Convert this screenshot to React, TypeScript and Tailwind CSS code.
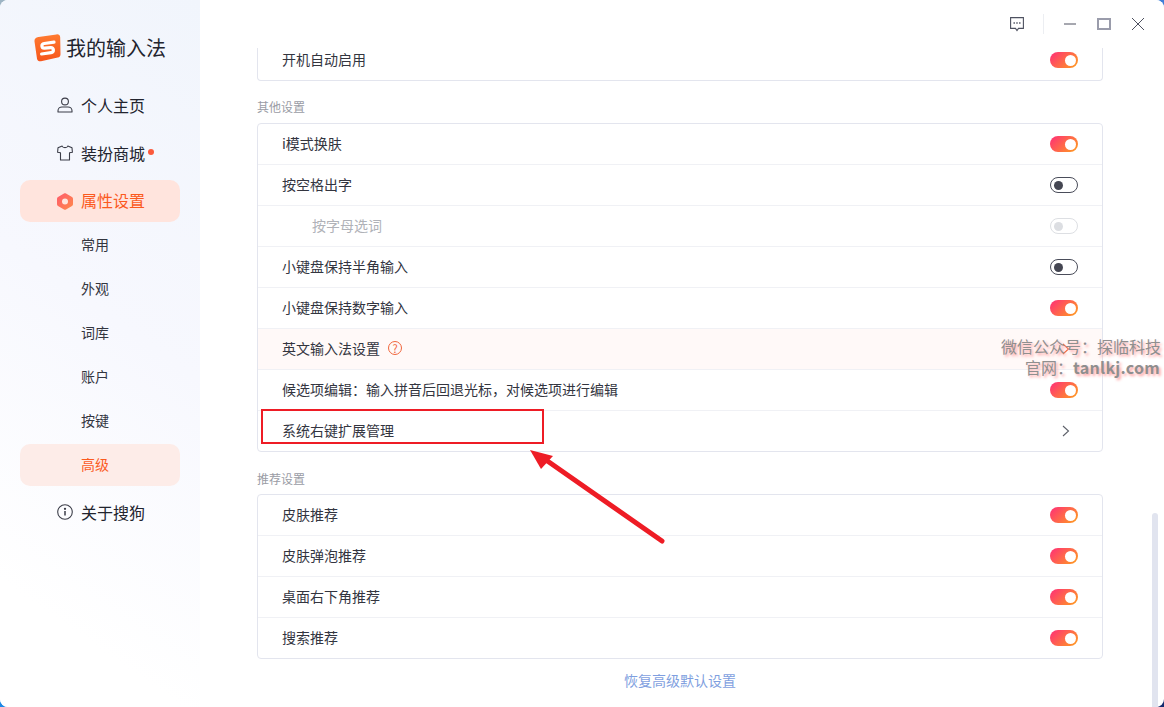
import type { ReactNode } from 'react';

type RowProps = {
  label: ReactNode;
  toggle?: 'on' | 'off' | 'disabled';
  chevron?: boolean;
  indent?: boolean;
  highlight?: boolean;
  muted?: boolean;
  last?: boolean;
};

function Toggle({ state }: { state: 'on' | 'off' | 'disabled' }) {
  if (state === 'on') {
    return (
      <div className="flex h-4 w-7 items-center justify-end rounded-full bg-[linear-gradient(135deg,#ff2d78,#ffa01e)] pr-[2px]">
        <div className="h-[11px] w-[11px] rounded-full bg-white" />
      </div>
    );
  }
  if (state === 'off') {
    return (
      <div className="flex h-4 w-7 items-center rounded-full border border-[#4a4d5a] bg-white pl-[3px]">
        <div className="h-[9px] w-[9px] rounded-full bg-[#444652]" />
      </div>
    );
  }
  return (
    <div className="flex h-4 w-7 items-center rounded-full border border-[#dddfe3] bg-white pl-[3px]">
      <div className="h-[9px] w-[9px] rounded-full bg-[#dcdee2]" />
    </div>
  );
}

function Row({ label, toggle, chevron, indent, highlight, muted, last }: RowProps) {
  return (
    <div
      className={`flex items-center justify-between pr-6 text-sm ${last ? 'h-[40px]' : 'h-[41px] border-b border-[#f0f1f5]'} ${
        indent ? 'pl-[54px]' : 'pl-6'
      } ${highlight ? 'bg-[#fff9f8]' : ''} ${muted ? 'text-[#b0b2b8]' : 'text-[#33353f]'}`}
    >
      <div className="flex items-center pb-[2px]">{label}</div>
      {toggle && <Toggle state={toggle} />}
      {chevron && (
        <svg width="28" height="16" viewBox="0 0 28 16" fill="none">
          <path d="M13 3l5.500 5-5.500 5" stroke={highlight ? '#f0663c' : '#5d6069'} strokeWidth="1.1" />
        </svg>
      )}
    </div>
  );
}

function Card({ children }: { children: ReactNode }) {
  return <div className="rounded border border-[#e3e5ee] bg-white">{children}</div>;
}

function SectionTitle({ children, tight }: { children: ReactNode; tight?: boolean }) {
  return (
    <div className={`h-[20px] text-xs leading-[20px] text-[#9a9ca5] ${tight ? 'mb-[5px] mt-[17px]' : 'mb-[6px] mt-4'}`}>
      {children}
    </div>
  );
}

function UserIcon() {
  return (
    <svg width="16" height="16" viewBox="0 0 16 16" fill="none" stroke="#3b3d48" strokeWidth="1.1">
      <circle cx="8" cy="4.500" r="3.400" />
      <path d="M1 15v-1.200C1 11.400 3 10 5 10h6c2 0 4 1.400 4 3.800V15z" strokeLinejoin="round" />
    </svg>
  );
}

function ShirtIcon() {
  return (
    <svg width="16" height="16" viewBox="0 0 16 16" fill="none" stroke="#3b3d48" strokeWidth="1.1" strokeLinejoin="round">
      <path d="M5.200 1L1 2.800.6 7.200l2.900.6V15h9V7.800l2.900-.6L15 2.800 10.800 1C10.300 3.200 5.700 3.200 5.200 1z" />
    </svg>
  );
}

function HexIcon() {
  return (
    <svg width="16" height="17" viewBox="0 0 16 17">
      <defs>
        <linearGradient id="hexFill" x1="0" y1="0" x2="1" y2="1">
          <stop offset="0" stopColor="#ff5a6c" />
          <stop offset="1" stopColor="#ff8a4a" />
        </linearGradient>
      </defs>
      <path
        fillRule="evenodd"
        fill="url(#hexFill)"
        d="M7 .6c.6-.35 1.400-.35 2 0l6 3.400c.6.35 1 1 1 1.700v5.600c0 .7-.4 1.350-1 1.700l-6 3.400c-.6.35-1.400.35-2 0l-6-3.400c-.6-.35-1-1-1-1.700V5.700C0 5 .4 4.350 1 4zM8 5.500a3 3 0 100 6 3 3 0 000-6z"
      />
    </svg>
  );
}

function InfoIcon() {
  return (
    <svg width="16" height="16" viewBox="0 0 16 16" fill="none" stroke="#3b3d48" strokeWidth="1.1">
      <circle cx="8" cy="8" r="7.300" />
      <path d="M8 7v4.500" strokeWidth="1.500" />
      <circle cx="8" cy="4.800" r=".6" fill="#3b3d48" />
    </svg>
  );
}

function Logo() {
  return (
    <svg width="27" height="28" viewBox="0 0 27 28">
      <defs>
        <linearGradient id="logoFill" x1="0" y1="0" x2="0" y2="1">
          <stop offset="0" stopColor="#ff7a30" />
          <stop offset="1" stopColor="#f6561c" />
        </linearGradient>
      </defs>
      <path
        d="M4.500 3L22.500 .4c2.200-.3 3.600.9 3.700 2.900l.3 17c0 2-1 3-2.800 3.300L7 27.300c-2 .3-3.500-.6-4-2.600L.5 7.500C.1 5 1.800 3.400 4.500 3z"
        fill="url(#logoFill)"
      />
      <path
        d="M20 8.200L10.200 9.500c-3.400.5-2.800 5 .4 4.700l6-.5c3.500-.3 3.800 4.500.4 5L7.600 20"
        fill="none"
        stroke="#fff"
        strokeWidth="3.200"
        strokeLinecap="round"
        strokeLinejoin="round"
      />
    </svg>
  );
}

function NavItem({ icon, label, dot }: { icon: ReactNode; label: string; dot?: boolean }) {
  return (
    <div className="mx-5 mb-1 flex h-[44px] items-center pl-[37px] text-base text-[#22242e]">
      <span className="mr-2 flex w-4 justify-center">{icon}</span>
      <span className="pb-px">{label}</span>
      {dot && <span className="ml-[3px] mb-[3px] h-[6px] w-[6px] rounded-full bg-[#fb5a3c]" />}
    </div>
  );
}

function SubItem({ label, active }: { label: string; active?: boolean }) {
  return (
    <div
      className={`mx-5 flex h-[42px] items-center rounded-[10px] pb-[2px] pl-[61px] text-sm ${
        active ? 'bg-[#fdece8] text-[#fb5a1e]' : 'text-[#33353f]'
      }`}
    >
      {label}
    </div>
  );
}

export default function App() {
  return (
    <div
      className="relative h-[707px] w-[1164px] overflow-hidden bg-white"
      style={{ fontFamily: '"Noto Sans CJK SC", "Liberation Sans", sans-serif' }}
    >
      {/* 窗口四角露出的桌面 */}
      <div className="absolute left-0 top-0 h-3 w-3 bg-[#9db4c4]" />
      <div className="absolute right-0 top-0 h-3 w-3 bg-[#3f7fd8]" />
      <div className="absolute bottom-0 left-0 h-3 w-3 bg-[#1e88e5]" />
      <div className="absolute bottom-0 right-0 h-3 w-3 bg-[#142a6e]" />

      <div className="relative flex h-full w-full overflow-hidden rounded-lg bg-white">
        <aside className="h-full w-[200px] shrink-0 bg-[linear-gradient(215deg,#f1f5fc_0%,#f7f8fe_45%,#ffffff_85%)] pt-8">
          <div className="mb-[19px] flex h-[32px] items-center pl-[34px] text-xl text-[#22242e]">
            <span className="mr-[5px] flex">
              <Logo />
            </span>
            我的输入法
          </div>
          <div className="flex flex-col">
            <NavItem icon={<UserIcon />} label="个人主页" />
            <NavItem icon={<ShirtIcon />} label="装扮商城" dot />
            <div className="mx-5 mt-px flex h-[42px] items-center rounded-[10px] bg-[#ffe4dd] pl-[37px] text-base text-[#fb5a1e]">
              <span className="mr-2 flex w-4 justify-center">
                <HexIcon />
              </span>
              <span className="pb-[2px]">属性设置</span>
            </div>
            <div className="mt-[2px]">
              <SubItem label="常用" />
              <div className="h-[2px]" />
              <SubItem label="外观" />
              <div className="h-[2px]" />
              <SubItem label="词库" />
              <div className="h-[2px]" />
              <SubItem label="账户" />
              <div className="h-[2px]" />
              <SubItem label="按键" />
              <div className="h-[2px]" />
              <SubItem label="高级" active />
            </div>
            <div className="mt-1">
              <NavItem icon={<InfoIcon />} label="关于搜狗" />
            </div>
          </div>
        </aside>

        <main className="h-full flex-1 overflow-hidden pl-[57px] pr-[61px] pt-10">
          <div className="rounded-b border-x border-b border-[#e3e5ee]">
            <Row label="开机自动启用" toggle="on" last />
          </div>
          <SectionTitle>其他设置</SectionTitle>
          <Card>
            <Row label="i模式换肤" toggle="on" />
            <Row label="按空格出字" toggle="off" />
            <Row label="按字母选词" toggle="disabled" indent muted />
            <Row label="小键盘保持半角输入" toggle="off" />
            <Row label="小键盘保持数字输入" toggle="on" />
            <Row
              highlight
              chevron
              label={
                <>
                  英文输入法设置
                  <span className="ml-2 flex h-[14px] w-[14px] items-center justify-center rounded-full border border-[#f0663c] text-[11px] leading-none text-[#f0663c]">
                    ?
                  </span>
                </>
              }
            />
            <Row label="候选项编辑：输入拼音后回退光标，对候选项进行编辑" toggle="on" />
            <Row label="系统右键扩展管理" chevron last />
          </Card>
          <SectionTitle tight>推荐设置</SectionTitle>
          <Card>
            <Row label="皮肤推荐" toggle="on" />
            <Row label="皮肤弹泡推荐" toggle="on" />
            <Row label="桌面右下角推荐" toggle="on" />
            <Row label="搜索推荐" toggle="on" last />
          </Card>
          <div className="mt-[11px] text-center text-sm leading-[20px] text-[#7f9fe0]">恢复高级默认设置</div>
        </main>
      </div>

      {/* 滚动条 */}
      <div className="absolute right-[6px] top-[513px] h-[194px] w-[6px] rounded-t-full bg-[#e1e4ef]" />

      {/* 标题栏 */}
      <div className="absolute left-[200px] right-0 top-0 flex h-[48px] items-center justify-end rounded-tr-lg bg-white pr-5">
        <svg width="14" height="15" viewBox="0 0 14 15" fill="none" stroke="#4e5160" strokeWidth="1.1" className="mr-[19px] mt-px">
          <path d="M.6.6h12.800v10.800H8.500L7 13.500 5.500 11.400H.6z" />
          <path d="M3.500 6h1.400M6.300 6h1.400M9.100 6h1.400" strokeWidth="1.600" />
        </svg>
        <div className="mr-5 h-[20px] w-px bg-[#eceef2]" />
        <svg width="12" height="12" viewBox="0 0 12 12" className="mr-[21px]">
          <path d="M0 6h12" stroke="#4e5160" strokeWidth="1" />
        </svg>
        <svg width="14" height="12" viewBox="0 0 14 12" fill="none" className="mr-[21px]">
          <rect x="1" y="1" width="12" height="10" stroke="#9a9cab" strokeWidth="2" />
        </svg>
        <svg width="12" height="12" viewBox="0 0 12 12" fill="none">
          <path d="M0 0l12 12M12 0L0 12" stroke="#4e5160" strokeWidth="1" />
        </svg>
      </div>

      {/* 水印 */}
      <div className="pointer-events-none absolute right-[3px] top-[336px] text-right text-base leading-[21px] text-[#8f8f8f] [text-shadow:2px_2px_3px_#ff9d9d]">
        <div>微信公众号：探临科技</div>
        <div className="pr-[1px]">
          官网：<span className="font-bold tracking-[0.3px]">tanlkj.com</span>
        </div>
      </div>

      {/* 红框和箭头标注 */}
      <div className="pointer-events-none absolute left-[261px] top-[409px] h-[35px] w-[283px] border-2 border-[#ee1c25]" />
      <svg className="pointer-events-none absolute left-[520px] top-[440px]" width="150" height="110" viewBox="0 0 150 110">
        <path d="M142 101L26 20" stroke="#ee1c25" strokeWidth="5" strokeLinecap="round" />
        <path d="M10 10l23 6-12 13z" fill="#ee1c25" />
      </svg>
    </div>
  );
}
